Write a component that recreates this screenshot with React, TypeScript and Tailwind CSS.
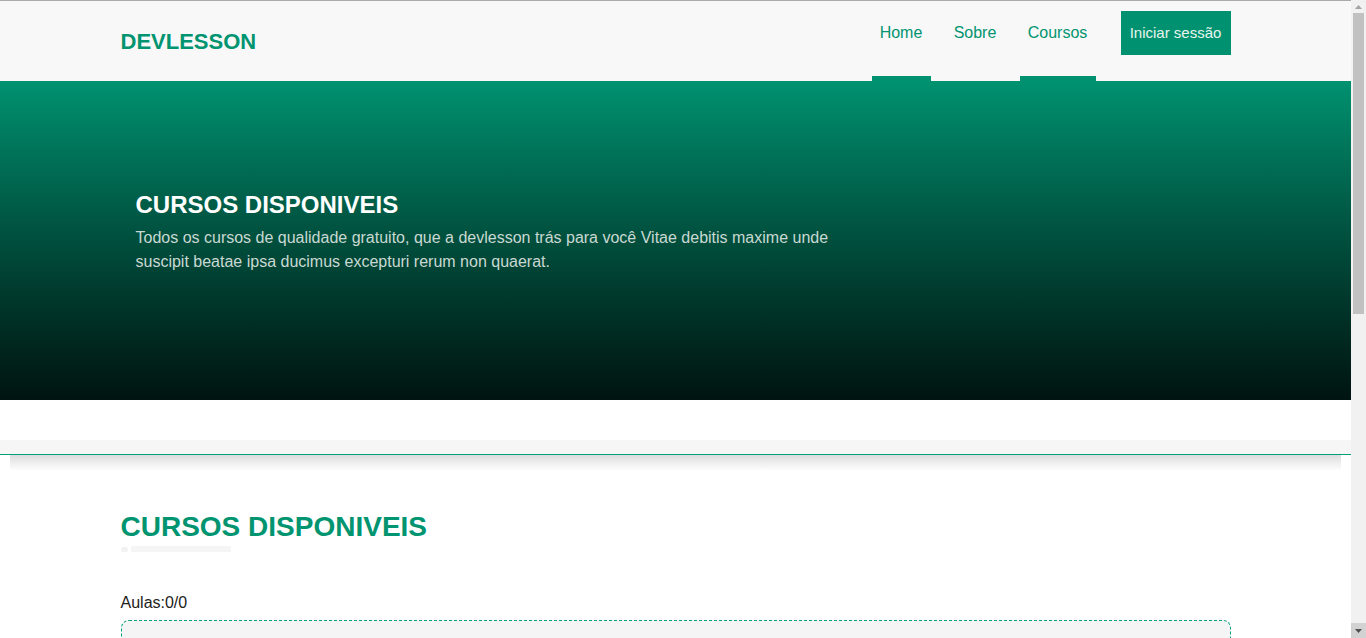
export default function App() {
  return (
    <div className="h-[638px] overflow-hidden flex bg-white">
      <main className="flex-1 min-w-0 font-['Liberation_Sans',Arial,sans-serif] border-t border-[#aaaaaa]">
        {/* Cabeçalho */}
        <header className="bg-[#f8f8f8] h-[80px]">
          <div className="max-w-[1110px] mx-auto h-full flex items-start justify-between">
            <a className="mt-[29px] text-[22px] leading-[24px] font-bold text-[#009470]">DEVLESSON</a>
            <nav className="flex items-start h-full">
              <a className="h-full flex flex-col justify-between w-[59px] mr-[15px]">
                <span className="pt-[22px] text-[16px] leading-[20px] text-[#009470] text-center">Home</span>
                <span className="h-[5px] bg-[#009270]" />
              </a>
              <a className="h-full flex flex-col w-[59px] mr-[15px]">
                <span className="pt-[22px] text-[16px] leading-[20px] text-[#009470] text-center">Sobre</span>
              </a>
              <a className="h-full flex flex-col justify-between w-[76px]">
                <span className="pt-[22px] text-[16px] leading-[20px] text-[#009470] text-center">Coursos</span>
                <span className="h-[5px] bg-[#009270]" />
              </a>
              <button className="ml-[25px] mt-[10px] h-[44px] w-[110px] bg-[#009270] text-[15px] text-[#e8f5ee]">
                Iniciar sessão
              </button>
            </nav>
          </div>
        </header>

        {/* Hero */}
        <section className="h-[319px] bg-gradient-to-b from-[#009270] to-[#001410]">
          <div className="max-w-[1110px] mx-auto px-[15px] pt-[110px]">
            <h1 className="text-[24px] leading-[28px] font-bold text-white">CURSOS DISPONIVEIS</h1>
            <p className="mt-[7px] w-[710px] text-[16px] leading-[24px] text-[#c9d9d2]">
              Todos os cursos de qualidade gratuito, que a devlesson trás para você Vitae debitis maxime unde suscipit beatae ipsa ducimus excepturi rerum non quaerat.
            </p>
          </div>
        </section>

        {/* Barra separadora */}
        <div className="mt-[40px] h-[14px] bg-[#f6f6f6]" />
        <div className="h-px bg-[#00a07a]" />
        <div className="mx-[10px] h-[16px] bg-gradient-to-b from-[#dcdcdc] via-[#efefef] to-white" />

        {/* Cursos */}
        <section className="max-w-[1110px] mx-auto pt-[40px]">
          <h2 className="text-[28px] leading-[32px] font-bold text-[#009470]">CURSOS DISPONIVEIS</h2>
          <div className="mt-[3px] flex items-center gap-[3px]">
            <span className="w-[7px] h-[5px] rounded-full bg-[#f2f2f2]" />
            <span className="w-[100px] h-[6px] bg-[#f5f5f5]" />
          </div>
          <p className="mt-[41px] text-[16px] leading-[20px] text-[#222]">Aulas:0/0</p>
          <div className="mt-[7px] h-[600px] rounded-[8px] border border-dashed border-[#00a07a] bg-[#f5f5f5]" />
        </section>
      </main>

      {/* Barra de rolagem */}
      <aside className="w-[15px] shrink-0 bg-[#f1f1f1] flex flex-col">
        <div className="h-[13px] flex items-center justify-center">
          <svg width="7" height="4" viewBox="0 0 7 4"><path d="M3.5 0L7 4H0z" fill="#a3a3a3" /></svg>
        </div>
        <div className="mx-[2px] h-[301px] bg-[#c1c1c1]" />
        <div className="flex-1" />
        <div className="h-[15px] bg-[#d2d2d2] flex items-center justify-center">
          <svg width="7" height="4" viewBox="0 0 7 4"><path d="M0 0H7L3.5 4z" fill="#505050" /></svg>
        </div>
      </aside>
    </div>
  );
}
